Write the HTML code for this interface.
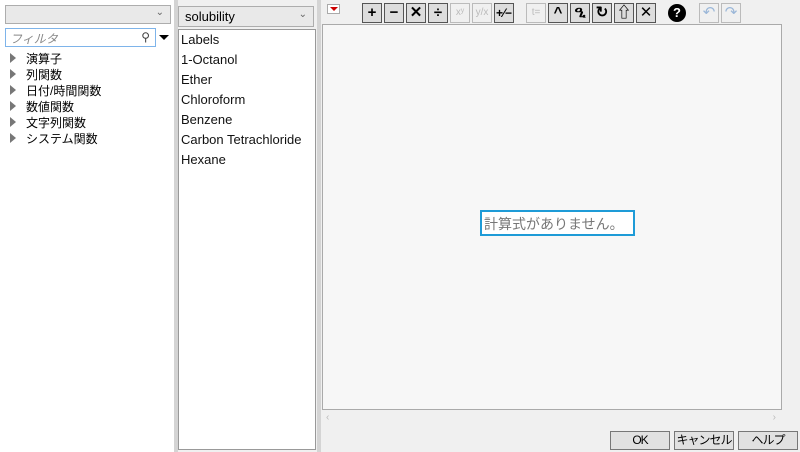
<!DOCTYPE html><html><head><meta charset="utf-8"><style>
html,body{margin:0;width:800px;height:452px;overflow:hidden}
body{background:#f0f0f0;font-family:"Liberation Sans","Noto Sans CJK JP",sans-serif;position:relative}
.a{position:absolute;box-sizing:border-box}
.tb{position:absolute;top:3px;width:20px;height:20px;box-sizing:border-box;border:1px solid #555;background:#ddd;font-size:15px;font-weight:bold;text-align:center;line-height:18px;color:#000;white-space:nowrap;overflow:hidden}
.dis{border-color:#bbb;color:#bbb;background:#f0f0f0;font-weight:normal;font-size:10px}
.tr{position:absolute;left:10px;font-size:12px;color:#000;white-space:nowrap}
.tr:before{content:"";display:inline-block;border-left:6px solid #777;border-top:5px solid transparent;border-bottom:5px solid transparent;margin-right:10px}
.li{position:absolute;left:181px;font-size:13px;color:#111;white-space:nowrap}
.btn{position:absolute;top:431px;height:19px;border:1px solid #777;background:#e1e1e1;box-sizing:border-box;font-size:12px;text-align:center;line-height:17px;white-space:nowrap;overflow:hidden;letter-spacing:-1px}
</style></head><body>
<div class="a" style="left:0;top:0;width:174px;height:452px;background:#fff"></div>
<div class="a" style="left:5px;top:5px;width:166px;height:19px;border:1px solid #adadad;background:#e9e9e9"><span style="position:absolute;right:6px;top:1px;font-size:10px;color:#666">⌄</span></div>
<div class="a" style="left:5px;top:28px;width:151px;height:19px;border:1px solid #7eb4ea;background:#fff;font-size:12px;font-style:italic;color:#888;padding:1px 4px">フィルタ<span style="position:absolute;right:5px;top:1px;font-style:normal;color:#444">⚲</span></div>
<div class="a" style="left:159px;top:35px;border-left:5px solid transparent;border-right:5px solid transparent;border-top:5px solid #000"></div>
<div class="tr" style="top:50px">演算子</div>
<div class="tr" style="top:66px">列関数</div>
<div class="tr" style="top:82px">日付/時間関数</div>
<div class="tr" style="top:98px">数値関数</div>
<div class="tr" style="top:114px">文字列関数</div>
<div class="tr" style="top:130px">システム関数</div>
<div class="a" style="left:174px;top:0;width:4px;height:452px;background:#d4d4d4"></div>
<div class="a" style="left:178px;top:6px;width:136px;height:21px;border:1px solid #adadad;background:#e9e9e9;font-size:13px;padding:2px 6px">solubility<span style="position:absolute;right:6px;top:2px;font-size:10px;color:#666">⌄</span></div>
<div class="a" style="left:178px;top:29px;width:138px;height:421px;border:1px solid #999;background:#fff"></div>
<div class="li" style="top:32px">Labels</div>
<div class="li" style="top:52px">1-Octanol</div>
<div class="li" style="top:72px">Ether</div>
<div class="li" style="top:92px">Chloroform</div>
<div class="li" style="top:112px">Benzene</div>
<div class="li" style="top:132px">Carbon Tetrachloride</div>
<div class="li" style="top:152px">Hexane</div>
<div class="a" style="left:317px;top:0;width:4px;height:452px;background:#d4d4d4"></div>
<div class="a" style="left:327px;top:4px;width:13px;height:10px;border:1px solid #aaa;background:#fff"><div style="position:absolute;left:2px;top:2px;border-left:4px solid transparent;border-right:4px solid transparent;border-top:4px solid #c00"></div></div>
<div class="tb" style="left:362px">+</div><div class="tb" style="left:384px">−</div><div class="tb" style="left:406px">✕</div><div class="tb" style="left:428px">÷</div>
<div class="tb dis" style="left:450px">xʸ</div><div class="tb dis" style="left:472px">y/x</div>
<div class="tb" style="left:494px;font-size:12px">+⁄−</div>
<div class="tb dis" style="left:526px">t=</div>
<div class="tb" style="left:548px">^</div><div class="tb" style="left:570px">ዒ</div><div class="tb" style="left:592px">↻</div><div class="tb" style="left:614px">⇧</div><div class="tb" style="left:636px;font-weight:normal">✕</div>
<div class="a" style="left:668px;top:4px;width:18px;height:18px;border-radius:50%;background:#000;color:#fff;font-size:13px;font-weight:bold;text-align:center;line-height:18px">?</div>
<div class="tb dis" style="left:699px;color:#9bb7d8;font-size:15px">↶</div><div class="tb dis" style="left:721px;color:#9bb7d8;font-size:15px">↷</div>
<div class="a" style="left:322px;top:24px;width:460px;height:386px;border:1px solid #aaa;background:#f7f7f7"></div>
<div class="a" style="left:480px;top:210px;width:155px;height:26px;border:2px solid #1e9bd7;background:#fff;font-size:14px;color:#777;padding:2px 2px;white-space:nowrap">計算式がありません。</div>
<div class="a" style="left:322px;top:410px;width:460px;height:16px;background:#f0f0f0;color:#bbb;font-size:10px"><span style="position:absolute;left:4px;top:2px">‹</span><span style="position:absolute;right:6px;top:2px">›</span></div>
<div class="btn" style="left:610px;width:60px">OK</div>
<div class="btn" style="left:674px;width:60px">キャンセル</div>
<div class="btn" style="left:738px;width:60px">ヘルプ</div>
</body></html>
